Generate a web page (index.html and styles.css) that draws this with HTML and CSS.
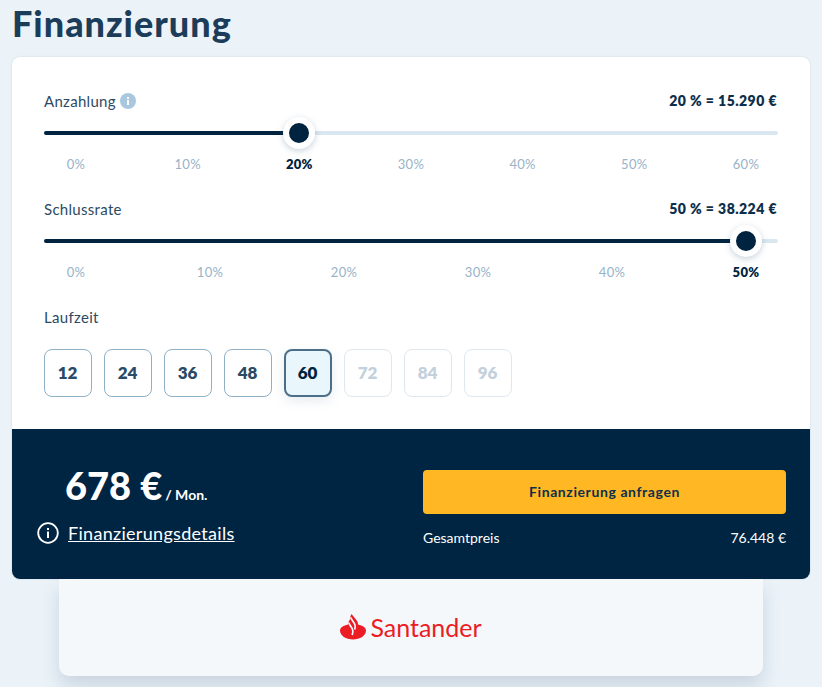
FILE: index.html
```html
<!DOCTYPE html>
<html lang="de">
  <head>
    <meta charset="UTF-8" />
    <title>Finanzierung</title>
    <link rel="stylesheet" href="styles.css">
  </head>
  <body>
    <h1>Finanzierung</h1>
    <div class="card">
      <div class="options">
        <div class="row-head">
          <span class="label">Anzahlung
            <svg class="hint" width="16" height="16" viewBox="0 0 16 16"><circle cx="8" cy="8" r="8" fill="#a9c8de"/><rect x="7" y="7" width="2" height="5" fill="#fff"/><rect x="7" y="4" width="2" height="2" fill="#fff"/></svg>
          </span>
          <span class="value">20 % = 15.290 €</span>
        </div>
        <div class="slider">
          <div class="fill" style="width: 34.74%"></div>
          <div class="thumb" style="left: 34.74%"></div>
        </div>
        <div class="ticks">
          <span>0%</span><span>10%</span><span class="on">20%</span><span>30%</span><span>40%</span><span>50%</span><span>60%</span>
        </div>

        <div class="row-head second">
          <span class="label">Schlussrate</span>
          <span class="value">50 % = 38.224 €</span>
        </div>
        <div class="slider">
          <div class="fill" style="width: 95.6%"></div>
          <div class="thumb" style="left: 95.6%"></div>
        </div>
        <div class="ticks">
          <span>0%</span><span>10%</span><span>20%</span><span>30%</span><span>40%</span><span class="on">50%</span>
        </div>

        <div class="label term-label">Laufzeit</div>
        <div class="terms">
          <button class="term">12</button>
          <button class="term">24</button>
          <button class="term">36</button>
          <button class="term">48</button>
          <button class="term active">60</button>
          <button class="term off">72</button>
          <button class="term off">84</button>
          <button class="term off">96</button>
        </div>
      </div>

      <div class="summary">
        <div class="summary-left">
          <div class="price"><strong>678 €</strong><span>/ Mon.</span></div>
          <div class="details">
            <svg width="22" height="22" viewBox="0 0 22 22" fill="none"><circle cx="11" cy="11" r="9.8" stroke="#fff" stroke-width="1.8"/><rect x="10" y="9.5" width="2" height="6.5" fill="#fff"/><rect x="10" y="6" width="2" height="2" fill="#fff"/></svg>
            <a href="#">Finanzierungsdetails</a>
          </div>
        </div>
        <div class="summary-right">
          <button class="cta">Finanzierung anfragen</button>
          <div class="total"><span>Gesamtpreis</span><span>76.448 €</span></div>
        </div>
      </div>
    </div>

    <div class="bank">
      <svg width="26" height="26" viewBox="0 0 26 26"><path fill="#ec1c24" d="M8 10.500C3.500 11.500 0 13.500 0 16.500 0 21.500 6 25.500 13 25.500S26 21.500 26 16.500C26 13.500 22.500 11.500 18 10.500 18 8.500 17.300 7 16 5.500L11.500 0C10.500 1.500 10.200 3 10.500 4.500 9.300 6.500 8 8.500 8 10.500Z"/><path fill="none" stroke="#f4f8fb" stroke-width="1.700" d="M10.800 3.500C11.500 6 14.300 8.500 15 11 15.400 12.500 15.200 14 14.700 15.500"/><path fill="none" stroke="#f4f8fb" stroke-width="1.700" d="M8.700 8.500C9.300 11 12 13.500 12.700 16 13.100 17.500 12.800 19.500 12.200 21"/></svg>
      <span class="bank-name">Santander</span>
    </div>
  </body>
</html>
```

FILE: styles.css
```css
* {
  box-sizing: border-box;
}

body {
  font-family: Lato, "Open Sans", sans-serif;
  background-color: #ebf3f8;
  margin: 0;
  padding: 0 12px;
  color: #0b2a45;
  height: 687px;
  overflow: hidden;
}

h1 {
  font-size: 36px;
  line-height: 47px;
  font-weight: 900;
  color: #1c3d5a;
  letter-spacing: 1px;
  margin: 0 0 10px;
}

.card {
  width: 798px;
  background-color: #fff;
  border-radius: 8px;
  overflow: hidden;
  box-shadow: 0 0 2px rgba(40, 90, 130, 0.2);
}

.options {
  padding: 33px 32px 32px;
}

.row-head {
  display: flex;
  justify-content: space-between;
  align-items: center;
  height: 20px;
}

.row-head.second {
  margin-top: 26px;
}

.label {
  font-size: 15px;
  color: #2d4a63;
  display: flex;
  align-items: center;
  gap: 4px;
  padding-top: 1px;
  letter-spacing: 0.3px;
}

.value {
  font-size: 14px;
  font-weight: 800;
  color: #0e2f4b;
  letter-spacing: 0.45px;
  margin-right: 1px;
}

.slider {
  position: relative;
  height: 4px;
  margin-top: 21px;
  border-radius: 2px;
  background-color: #d9e7f1;
}

.fill {
  height: 4px;
  border-radius: 2px;
  background-color: #002340;
}

.thumb {
  position: absolute;
  top: 2px;
  width: 32px;
  height: 32px;
  margin: -16px 0 0 -16px;
  border-radius: 50%;
  border: 6px solid #fff;
  background-color: #002340;
  box-shadow: 0 2px 6px rgba(40, 80, 120, 0.25);
}

.ticks {
  display: flex;
  justify-content: space-between;
  margin-top: 21px;
  font-size: 13px;
  line-height: 16px;
  color: #98b3c7;
  letter-spacing: 0.3px;
}

.ticks span {
  width: 64px;
  text-align: center;
}

.ticks .on {
  color: #002340;
  font-weight: 800;
}

.term-label {
  margin-top: 26px;
  height: 20px;
}

.terms {
  display: flex;
  gap: 12px;
  margin-top: 23px;
}

.term {
  width: 48px;
  height: 48px;
  padding: 0 1px 1px 0;
  border: 1px solid #8fb0c6;
  border-radius: 8px;
  background-color: #fff;
  font-family: inherit;
  font-size: 17px;
  font-weight: 800;
  color: #2a4a66;
}

.term.active {
  border: 2px solid #4c6f89;
  background-color: #e9f6fb;
  color: #002340;
  box-shadow: 0 4px 12px rgba(60, 100, 140, 0.12);
}

.term.off {
  border-color: #e0e8ef;
  color: #c3d1dc;
}

.summary {
  display: flex;
  justify-content: space-between;
  height: 150px;
  background-color: #002542;
  color: #fff;
}

.summary-left {
  padding: 33px 0 0 25px;
}

.price {
  display: flex;
  align-items: baseline;
  gap: 3px;
  padding-left: 28px;
  height: 48px;
}

.price strong {
  font-size: 38px;
  font-weight: 900;
}

.price span {
  font-size: 14px;
  font-weight: 700;
}

.details {
  display: flex;
  align-items: center;
  gap: 9px;
  margin-top: 12px;
}

.details a {
  font-size: 18px;
  color: #fff;
  letter-spacing: 0.3px;
}

.summary-right {
  width: 363px;
  margin: 41px 24px 0 0;
}

.cta {
  display: block;
  width: 100%;
  height: 44px;
  padding-bottom: 2px;
  border: none;
  border-radius: 4px;
  background-color: #ffb823;
  font-family: inherit;
  font-size: 14px;
  font-weight: 700;
  color: #0e2f4b;
  letter-spacing: 0.6px;
}

.total {
  display: flex;
  justify-content: space-between;
  margin-top: 16px;
  font-size: 14px;
  line-height: 16px;
}

.bank {
  display: flex;
  justify-content: center;
  align-items: center;
  gap: 4px;
  width: 704px;
  height: 97px;
  margin-left: 47px;
  padding-bottom: 2px;
  border-radius: 0 0 10px 10px;
  background-color: #f4f8fb;
  box-shadow: 0 10px 18px rgba(50, 80, 120, 0.18);
}

.bank-name {
  font-size: 25px;
  color: #ec1c24;
}
```
